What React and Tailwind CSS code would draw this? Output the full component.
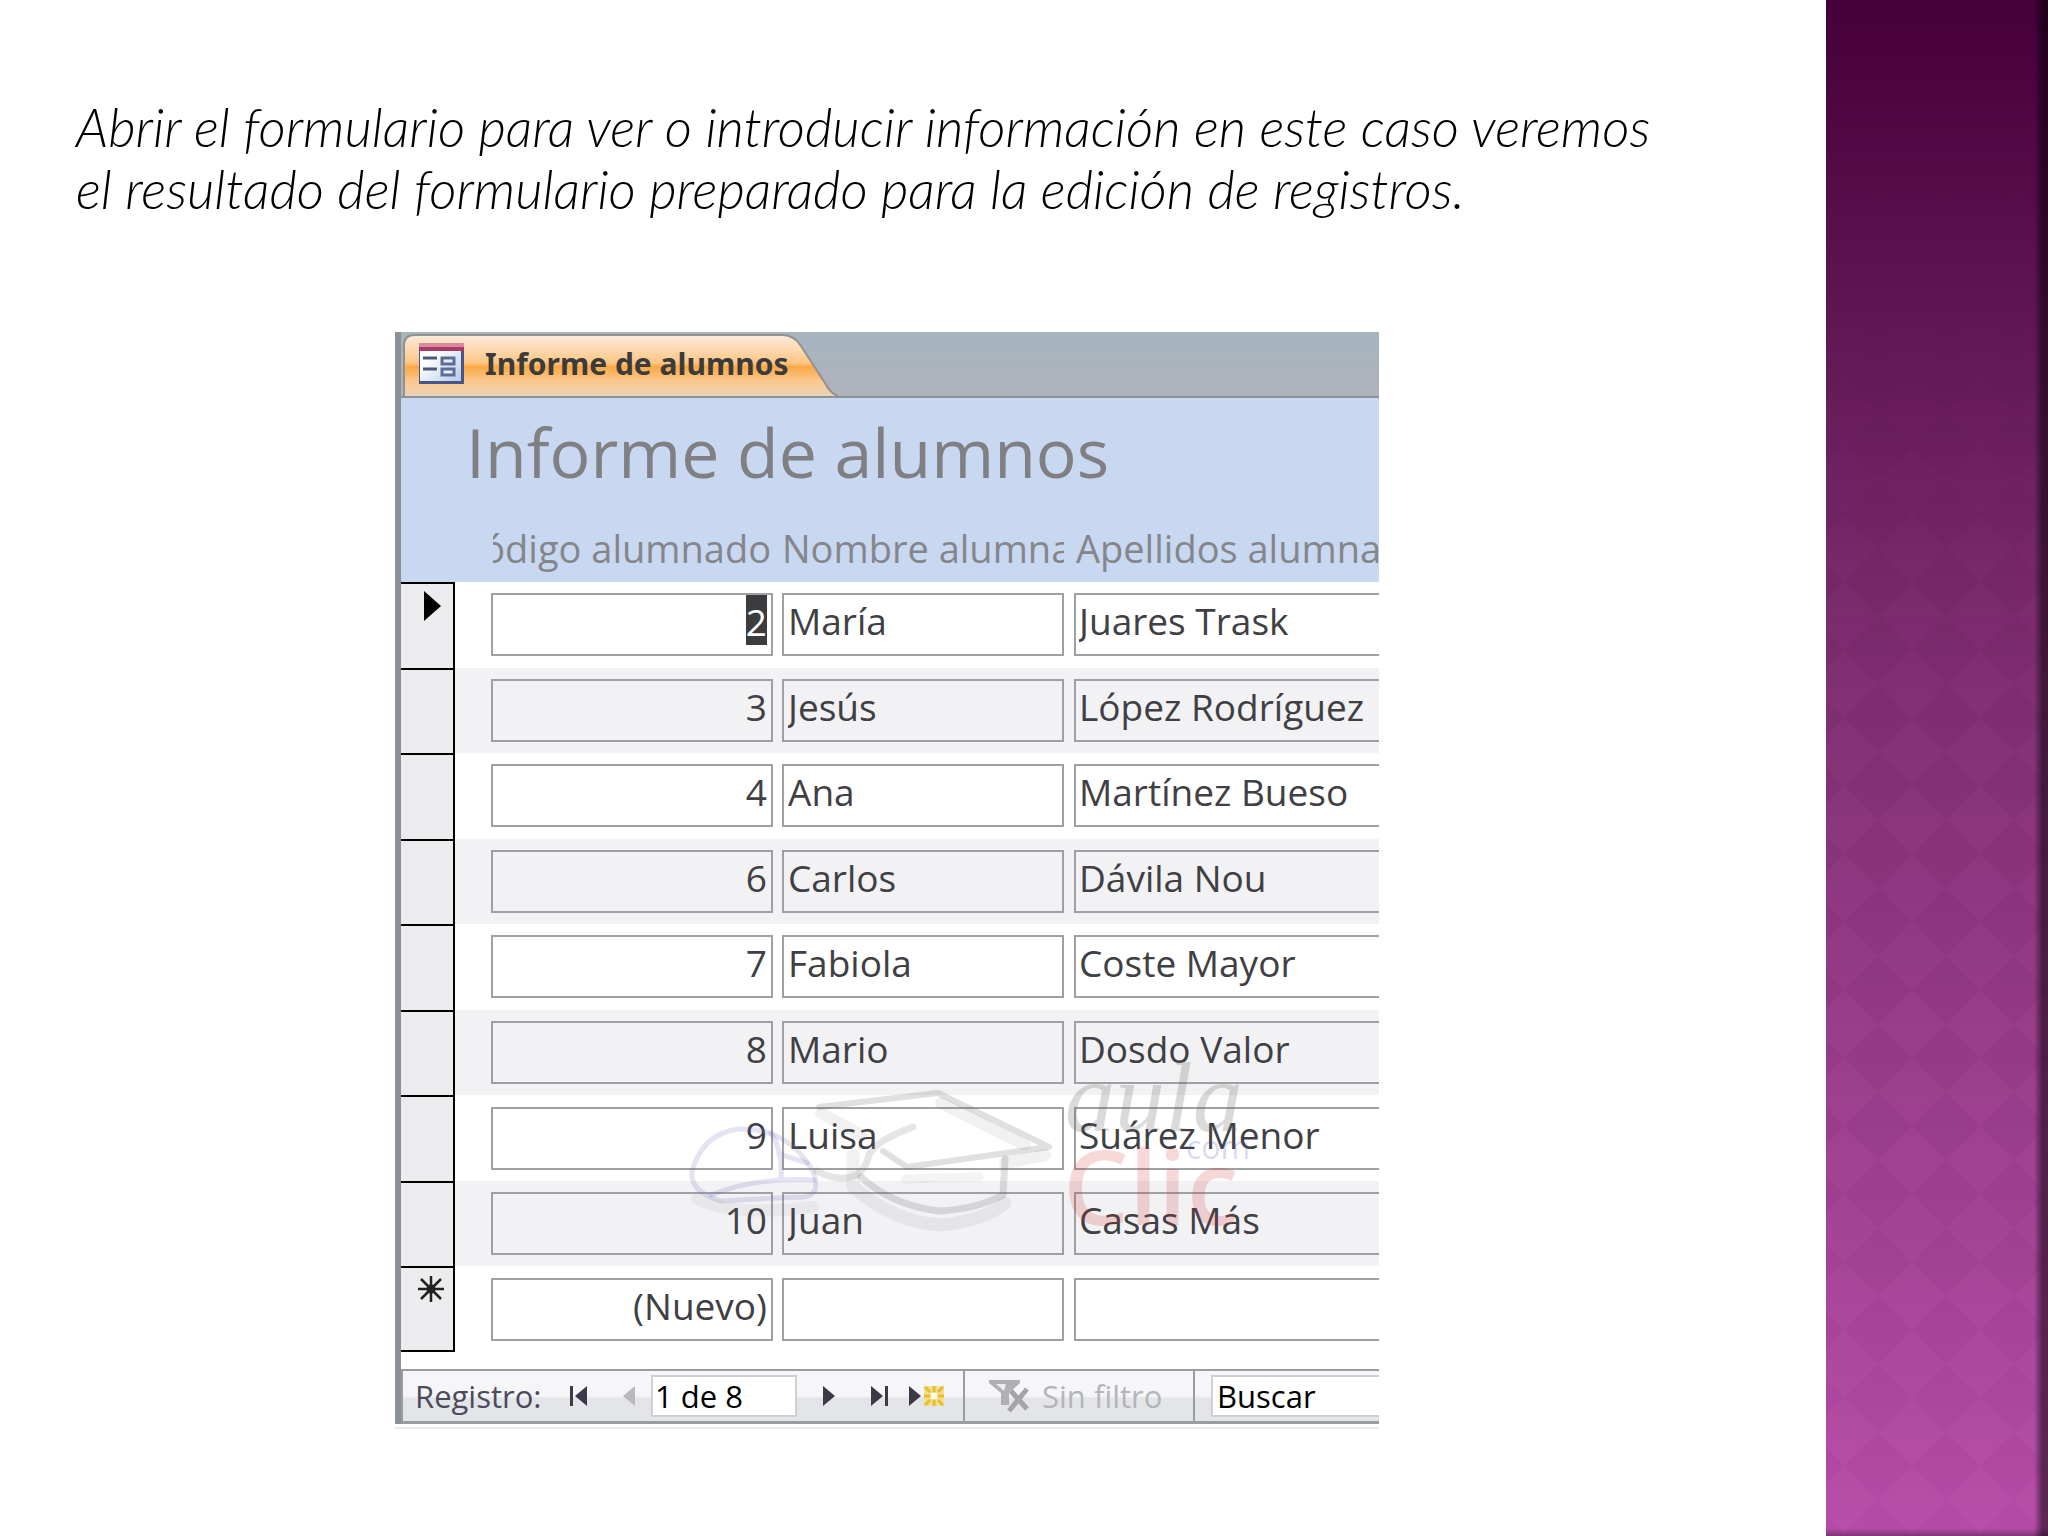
import React from "react";

const rows = [
  { code: "2", name: "María", surname: "Juares Trask" },
  { code: "3", name: "Jesús", surname: "López Rodríguez" },
  { code: "4", name: "Ana", surname: "Martínez Bueso" },
  { code: "6", name: "Carlos", surname: "Dávila Nou" },
  { code: "7", name: "Fabiola", surname: "Coste Mayor" },
  { code: "8", name: "Mario", surname: "Dosdo Valor" },
  { code: "9", name: "Luisa", surname: "Suárez Menor" },
  { code: "10", name: "Juan", surname: "Casas Más" },
  { code: "(Nuevo)", name: "", surname: "" },
];

function FormIcon() {
  return (
    <svg className="h-[42px] w-[46px] shrink-0" viewBox="0 0 46 42" aria-hidden="true">
      <defs>
        <linearGradient id="form-paper" x1="0" y1="0" x2="1" y2="1">
          <stop offset="0.3" stopColor="#ffffff" />
          <stop offset="1" stopColor="#b4cbe8" />
        </linearGradient>
      </defs>
      <rect x="0" y="0" width="45" height="41" fill="#4a5488" />
      <rect x="1" y="1" width="41" height="37" fill="url(#form-paper)" />
      <rect x="0" y="0" width="45" height="8" fill="#a93a66" />
      <rect x="0" y="0" width="45" height="4" fill="#d98a9c" />
      <path d="M4 15H18M4 26H18" stroke="#4c5878" strokeWidth="3" />
      <rect x="23" y="15" width="12" height="6" fill="#e6edf8" stroke="#5c6e98" strokeWidth="3" />
      <rect x="23" y="26" width="12" height="6" fill="#e6edf8" stroke="#5c6e98" strokeWidth="3" />
    </svg>
  );
}

function Tab() {
  return (
    <div className="relative h-[64px] w-[440px]">
      <svg className="absolute inset-0 h-full w-full" viewBox="0 0 440 64" preserveAspectRatio="none" aria-hidden="true">
        <defs>
          <linearGradient id="tab-fill" x1="0" y1="0" x2="0" y2="1">
            <stop offset="0" stopColor="#fbeadb" />
            <stop offset="0.2" stopColor="#fddcb8" />
            <stop offset="0.46" stopColor="#fcc583" />
            <stop offset="0.52" stopColor="#fba844" />
            <stop offset="0.75" stopColor="#fac88c" />
            <stop offset="1" stopColor="#e9d3b8" />
          </linearGradient>
        </defs>
        <path d="M3 64V14Q3 3 13 3H382Q393 3 400 14L424 51Q430 62 437 64Z" fill="url(#tab-fill)" />
        <path d="M3 64V14Q3 3 13 3H382Q393 3 400 14L424 51Q430 62 437 64" fill="none" stroke="#93908e" strokeWidth="2" />
      </svg>
      <div className="relative flex h-full items-center pl-[18px]">
        <FormIcon />
        <span className="ml-5 whitespace-nowrap font-['Noto_Sans',sans-serif] text-[30px] font-bold leading-none text-[#3b3b3b]">
          Informe de alumnos
        </span>
      </div>
    </div>
  );
}

function RowMarker({ index }) {
  if (index === 0) {
    return (
      <svg className="ml-[22px] mt-[7px] h-[30px] w-[20px]" viewBox="0 0 20 30" aria-label="Registro actual">
        <path d="M1 0L18 15L1 30Z" fill="#000" />
      </svg>
    );
  }
  if (index === rows.length - 1) {
    return (
      <svg className="ml-[17px] mt-2 h-[26px] w-[26px]" viewBox="0 0 26 26" aria-label="Registro nuevo">
        <path d="M13 0V26M0 13H26M3 3L23 23M23 3L3 23" stroke="#222" strokeWidth="2.500" />
        <circle cx="13" cy="13" r="4.500" fill="#222" />
      </svg>
    );
  }
  return null;
}

function Watermark() {
  return (
    <svg className="pointer-events-none absolute left-[284px] top-[700px] h-[210px] w-[590px]" viewBox="0 -7 590 210" aria-hidden="true">
      <g fill="none" strokeLinecap="round" strokeLinejoin="round">
        <path d="M13 132Q24 94 60 90Q108 88 134 132Q144 160 118 158L42 162Q10 152 13 132Z" stroke="#6464b4" strokeOpacity="0.18" strokeWidth="5" />
        <path d="M32 156Q76 138 135 141M92 94Q104 112 102 138M100 115L128 124" stroke="#6464b4" strokeOpacity="0.18" strokeWidth="5" />
        <path d="M18 160Q56 178 134 168" stroke="#777" strokeOpacity="0.07" strokeWidth="12" />
        <path d="M138 132Q156 142 172 138Q186 134 190 116Q196 102 234 88" stroke="#666" strokeOpacity="0.17" strokeWidth="7" />
        <path d="M140 68L259 54L370 108L228 128L204 112" stroke="#666" strokeOpacity="0.2" strokeWidth="6" />
        <path d="M142 74L182 96M262 64L346 106M366 116L326 124" stroke="#777" strokeOpacity="0.1" strokeWidth="12" />
        <path d="M182 138Q212 166 260 172Q298 170 324 156L326 120" stroke="#666" strokeOpacity="0.2" strokeWidth="7" />
        <path d="M174 116V148Q216 184 262 186Q304 182 326 164" stroke="#666" strokeOpacity="0.09" strokeWidth="13" />
        <path d="M226 140L300 138" stroke="#666" strokeOpacity="0.07" strokeWidth="9" />
      </g>
      <text x="386" y="92" fontFamily="Liberation Serif, serif" fontStyle="italic" fontSize="100" fill="#666" fillOpacity="0.24">aula</text>
      <text x="507" y="120" fontFamily="Open Sans, sans-serif" fontSize="32" fill="#5050c0" fillOpacity="0.22">com</text>
      <text x="384" y="186" fontFamily="Open Sans, sans-serif" fontWeight="600" fontSize="104" fill="#d22828" fillOpacity="0.18">Clic</text>
    </svg>
  );
}

function NavArrow({ left, bar, muted }) {
  const fill = muted ? "#b9b9bd" : "#3c3a48";
  return (
    <svg className="h-5 w-5" viewBox="0 0 20 20" aria-hidden="true">
      <g transform={left ? "matrix(-1 0 0 1 20 0)" : undefined} fill={fill}>
        <path d="M2 0L14 10L2 20Z" />
        {bar && <rect x="16" y="0" width="3" height="20" />}
      </g>
    </svg>
  );
}

function NewRecordIcon() {
  return (
    <svg className="h-5 w-9" viewBox="0 0 36 20" aria-hidden="true">
      <path d="M0 0L12 10L0 20Z" fill="#3c3a48" />
      <rect x="15" y="0" width="20" height="20" fill="#f3df94" />
      <g stroke="#e6bd2e" strokeWidth="3">
        <path d="M25 0V6M25 14V20M15 10H21M29 10H35M16 1L21 6M34 1L29 6M16 19L21 14M34 19L29 14" />
      </g>
      <rect x="22" y="7" width="6" height="6" fill="#fffbe6" />
    </svg>
  );
}

function FilterIcon() {
  return (
    <svg className="h-[34px] w-[41px]" viewBox="0 0 41 34" aria-hidden="true">
      <path d="M0 1H31V4L20 14V26H12V14L0 4Z" fill="#b0b0b4" />
      <path d="M7 5H17L15 12Z" fill="#ececf0" />
      <path d="M22 12L38 30M38 10L20 32" stroke="#a5a5a9" strokeWidth="5" fill="none" />
    </svg>
  );
}

function RecordBar() {
  return (
    <div className="flex h-[55px] items-stretch overflow-hidden border-b-[3px] border-l-2 border-t-2 border-[#9a9ca2] bg-linear-to-b from-[#f6f6f8] from-50% to-[#e4e5e9] to-55% font-['Open_Sans',sans-serif] text-[31px] leading-none text-[#4b4b5c]">
      <div className="flex w-[562px] shrink-0 items-center border-r-2 border-[#9a9ca2] pl-3">
        <label htmlFor="record" className="w-[144px]">Registro:</label>
        <button type="button" aria-label="Primer registro" className="ml-2.5"><NavArrow left bar /></button>
        <button type="button" aria-label="Registro anterior" className="ml-7"><NavArrow left muted /></button>
        <input id="record" defaultValue="1 de 8" className="ml-3.5 h-[42px] w-[146px] border-2 border-[#cfd0d6] bg-white pl-0.5 text-black" />
        <button type="button" aria-label="Registro siguiente" className="ml-6"><NavArrow /></button>
        <button type="button" aria-label="Último registro" className="ml-7"><NavArrow bar /></button>
        <button type="button" aria-label="Registro nuevo" className="ml-5"><NewRecordIcon /></button>
      </div>
      <button type="button" className="flex w-[230px] shrink-0 items-center gap-3 border-r-2 border-[#9a9ca2] pl-6 text-[#b4b4bb]">
        <FilterIcon />
        Sin filtro
      </button>
      <div className="flex min-w-0 flex-1 items-center pl-4">
        <input aria-label="Buscar" defaultValue="Buscar" className="h-[42px] w-full border-2 border-r-0 border-[#cfd0d6] bg-white pl-1 text-black" />
      </div>
    </div>
  );
}

function Columns() {
  return (
    <colgroup>
      <col className="w-[54px]" />
      <col className="w-[323px]" />
      <col className="w-[291px]" />
      <col />
    </colgroup>
  );
}

function FormWindow() {
  return (
    <section className="relative border-b-2 border-[#ebebef] pb-[3px]">
      <div className="border-l-[6px] border-[#8b9096]">
        <div className="border-b-2 border-[#8a939a] bg-linear-to-b from-[#a6b5be] to-[#afb2bc]">
          <Tab />
        </div>
        <div className="bg-[#c8d8f0] pb-[18px] pl-[65px] pt-2">
          <h1 className="whitespace-nowrap font-['Open_Sans',sans-serif] text-[68px] leading-[92px] text-[#808084]">Informe de alumnos</h1>
        </div>
        <table className="w-full table-fixed border-collapse font-['Open_Sans',sans-serif] text-[38px] leading-[48px] text-[#404044]">
          <Columns />
          <thead className="bg-[#c8d8f0] text-[#85868c]">
            <tr className="h-[66px]">
              <td />
              <th scope="col" className="p-0 pl-[38px] pr-[5px] pt-2 align-top font-normal">
                <div className="flex h-14 justify-end overflow-hidden whitespace-nowrap pr-0.5">Código alumnado</div>
              </th>
              <th scope="col" className="p-0 pl-1 pr-[5px] pt-2 text-left align-top font-normal">
                <div className="h-14 overflow-hidden whitespace-nowrap">Nombre alumnado</div>
              </th>
              <th scope="col" className="p-0 pl-[5px] pt-2 text-left align-top font-normal">
                <div className="h-14 overflow-hidden whitespace-nowrap pl-0.5">Apellidos alumnado</div>
              </th>
            </tr>
          </thead>
        </table>
        <div className="grid h-[787px] grid-rows-[770px_17px] bg-white">
          <table className="h-full w-full table-fixed border-separate border-spacing-0 font-['Open_Sans',sans-serif] text-[37px] leading-[42px] text-[#404044]">
            <Columns />
            <tbody>
              {rows.map((row, i) => (
                <tr key={row.code} className="even:bg-[#f2f2f4]">
                  <td className="border-r-2 border-t-2 border-black bg-[#ececee] p-0 align-top [tr:last-child>&]:border-b-2">
                    <RowMarker index={i} />
                  </td>
                  <td className="p-0 pl-9 pr-[5px] align-middle">
                    {i === 0 ? (
                      <div className="flex h-[63px] justify-end border-2 border-[#9fa0a4] pr-1">
                        <span className="h-[50px] bg-[#3c3c3e] pt-1.5 text-white">{row.code}</span>
                      </div>
                    ) : (
                      <input aria-label="Código alumnado" defaultValue={row.code} className="block h-[63px] w-full border-2 border-[#9fa0a4] pb-2 pr-1 text-right" />
                    )}
                  </td>
                  <td className="p-0 pl-1 pr-[5px] align-middle">
                    <input aria-label="Nombre alumnado" defaultValue={row.name} className="block h-[63px] w-full border-2 border-[#9fa0a4] pb-2 pl-1" />
                  </td>
                  <td className="p-0 pl-[5px] align-middle">
                    <input aria-label="Apellidos alumnado" defaultValue={row.surname} className="block h-[63px] w-full border-2 border-r-0 border-[#9fa0a4] pb-2 pl-[3px]" />
                  </td>
                </tr>
              ))}
            </tbody>
          </table>
        </div>
        <RecordBar />
      </div>
      <Watermark />
    </section>
  );
}

function SideBand() {
  return (
    <aside className="relative w-[222px] shrink-0 bg-linear-to-b from-[#46003a] via-[#7c2c6e] via-43% to-[#b54ba7]">
      <svg className="absolute inset-0 h-full w-full" aria-hidden="true">
        <defs>
          <pattern id="diamonds" width="68" height="68" patternUnits="userSpaceOnUse" x="52" y="38">
            <path d="M34 0L68 34L34 68L0 34Z" fill="#ff9cf0" fillOpacity="0.05" />
          </pattern>
          <linearGradient id="fade" x1="0" y1="0" x2="0" y2="1">
            <stop offset="0.1" stopColor="#000" />
            <stop offset="0.7" stopColor="#fff" />
          </linearGradient>
          <mask id="fade-mask">
            <rect width="100%" height="100%" fill="url(#fade)" />
          </mask>
        </defs>
        <rect width="100%" height="100%" fill="url(#diamonds)" mask="url(#fade-mask)" />
      </svg>
      <div className="absolute inset-y-0 right-0 w-[14px] bg-linear-to-r from-transparent to-black/50 to-60%" />
      <div className="absolute inset-x-0 bottom-0 h-2 bg-linear-to-b from-transparent to-black/30" />
    </aside>
  );
}

export default function App() {
  return (
    <div className="flex min-h-screen bg-white">
      <main className="flex-1">
        <p className="pl-[76px] pt-[96px] font-['Lato',sans-serif] text-[53px] font-light italic leading-[62px] text-black">
          Abrir el formulario para ver o introducir información en este caso veremos
          <br />
          el resultado del formulario preparado para la edición de registros.
        </p>
        <div className="ml-[395px] mr-[447px] mt-[112px]">
          <FormWindow />
        </div>
      </main>
      <SideBand />
    </div>
  );
}
